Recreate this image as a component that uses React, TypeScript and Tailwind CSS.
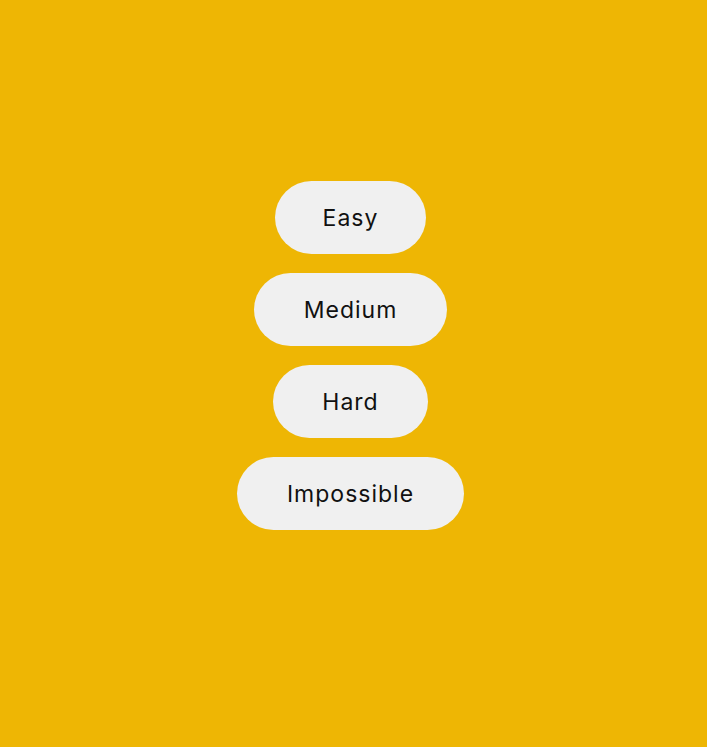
const levels = [
  { label: 'Easy', width: 'w-[151px]' },
  { label: 'Medium', width: 'w-[193px]' },
  { label: 'Hard', width: 'w-[155px]' },
  { label: 'Impossible', width: 'w-[227px]' },
];

export default function App() {
  return (
    <div className="min-h-screen w-full bg-[#eeb604] flex flex-col items-center gap-[19px] pt-[181px] pr-[6px] font-['Inter',sans-serif]">
      {levels.map((level) => (
        <button
          key={level.label}
          className={`${level.width} h-[73px] pt-[2px] rounded-full bg-[#f0f0f0] text-[23px] tracking-[1px] text-[#111] flex items-center justify-center`}
        >
          {level.label}
        </button>
      ))}
    </div>
  );
}
